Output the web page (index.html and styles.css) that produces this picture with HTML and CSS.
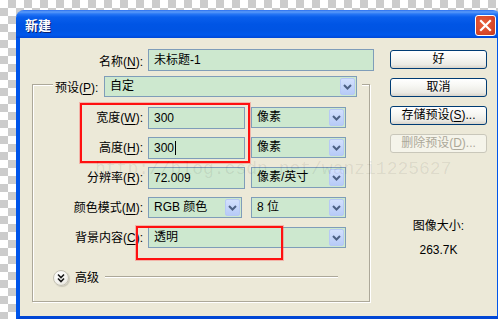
FILE: index.html
```html
<!DOCTYPE html>
<html>
<head>
<meta charset="utf-8">
<link rel="stylesheet" href="styles.css">
</head>
<body>
<div class="dialog">
  <div class="titlebar">
    <span class="title">新建</span>
    <span class="close"><svg width="13" height="13" viewBox="0 0 13 13"><path d="M2 2 L11 11 M11 2 L2 11" stroke="#fff" stroke-width="2.2" stroke-linecap="square"/></svg></span>
  </div>
  <div class="client">
    <div class="left">
      <div class="name-row">
        <span class="lbl">名称(<u>N</u>):</span>
        <div class="field w-name">未标题-1</div>
      </div>
      <div class="group">
        <div class="legend">
          <span class="lbl-legend">预设(<u>P</u>):</span>
          <div class="combo w-preset"><span class="val">自定</span><span class="drop"><svg width="9" height="6" viewBox="0 0 9 6"><path d="M1 1 L4.5 4.5 L8 1" fill="none" stroke="#4D6185" stroke-width="2"/></svg></span></div>
        </div>
        <div class="row first">
          <span class="lbl">宽度(<u>W</u>):</span>
          <div class="field w-num">300</div>
          <div class="combo w-unit"><span class="val">像素</span><span class="drop"><svg width="9" height="6" viewBox="0 0 9 6"><path d="M1 1 L4.5 4.5 L8 1" fill="none" stroke="#4D6185" stroke-width="2"/></svg></span></div>
        </div>
        <div class="row">
          <span class="lbl">高度(<u>H</u>):</span>
          <div class="field w-num">300<span class="caret"></span></div>
          <div class="combo w-unit"><span class="val">像素</span><span class="drop"><svg width="9" height="6" viewBox="0 0 9 6"><path d="M1 1 L4.5 4.5 L8 1" fill="none" stroke="#4D6185" stroke-width="2"/></svg></span></div>
        </div>
        <div class="row">
          <span class="lbl">分辨率(<u>R</u>):</span>
          <div class="field w-num">72.009</div>
          <div class="combo w-unit"><span class="val">像素/英寸</span><span class="drop"><svg width="9" height="6" viewBox="0 0 9 6"><path d="M1 1 L4.5 4.5 L8 1" fill="none" stroke="#4D6185" stroke-width="2"/></svg></span></div>
        </div>
        <div class="row">
          <span class="lbl">颜色模式(<u>M</u>):</span>
          <div class="combo w-mode"><span class="val">RGB 颜色</span><span class="drop"><svg width="9" height="6" viewBox="0 0 9 6"><path d="M1 1 L4.5 4.5 L8 1" fill="none" stroke="#4D6185" stroke-width="2"/></svg></span></div>
          <div class="combo w-unit"><span class="val">8 位</span><span class="drop"><svg width="9" height="6" viewBox="0 0 9 6"><path d="M1 1 L4.5 4.5 L8 1" fill="none" stroke="#4D6185" stroke-width="2"/></svg></span></div>
        </div>
        <div class="row">
          <span class="lbl">背景内容(<u>C</u>):</span>
          <div class="combo w-bg"><span class="val">透明</span><span class="drop"><svg width="9" height="6" viewBox="0 0 9 6"><path d="M1 1 L4.5 4.5 L8 1" fill="none" stroke="#4D6185" stroke-width="2"/></svg></span></div>
        </div>
        <div class="advanced">
          <span class="adv-icon"><svg width="16" height="16" viewBox="0 0 16 16"><path d="M5 4.5 L8 7.5 L11 4.5 M5 8.5 L8 11.5 L11 8.5" fill="none" stroke="#1a1a1a" stroke-width="1.6"/></svg></span>
          <span class="adv-text">高级</span>
          <span class="adv-line"></span>
        </div>
        <div class="redbox rb1"></div>
        <div class="redbox rb2"></div>
      </div>
    </div>
    <div class="right">
      <div class="btn">好</div>
      <div class="btn">取消</div>
      <div class="btn">存储预设(<u>S</u>)...</div>
      <div class="btn disabled">删除预设(<u>D</u>)...</div>
      <div class="size-label">图像大小:</div>
      <div class="size-val">263.7K</div>
    </div>
    <div class="watermark">http://blog.csdn.net/wanzi1225627</div>
  </div>
</div>
</body>
</html>
```

FILE: styles.css
```css
html, body {
  margin: 0;
  padding: 0;
}
body {
  width: 498px;
  height: 319px;
  overflow: hidden;
  background: repeating-conic-gradient(#cccccc 0 25%, #ffffff 0 50%) 0 0 / 16px 16px;
  font-family: "Liberation Sans", "Noto Sans CJK SC", sans-serif;
  font-size: 12px;
  color: #000;
}
.dialog {
  margin: 10px 0 0 16px;
  width: 485px;
}
.titlebar {
  height: 28px;
  box-sizing: border-box;
  border-radius: 8px 8px 0 0;
  background: linear-gradient(to bottom, #2a6ff0 0px, #5b9bf8 2px, #2877f5 4px, #0a5fec 7px, #0055e5 14px, #0054e3 20px, #0058ec 25px, #0047d6 28px);
  display: flex;
  align-items: flex-start;
  justify-content: space-between;
  padding: 5px 5px 0 9px;
}
.title {
  margin-top: 2px;
  line-height: 16px;
  font-family: "Noto Sans CJK SC", sans-serif;
  font-weight: bold;
  font-size: 13px;
  color: #fff;
  text-shadow: 1px 1px 0 #0a1e6e;
}
.close {
  width: 21px;
  height: 21px;
  box-sizing: border-box;
  border: 1px solid #fff;
  border-radius: 3px;
  background: radial-gradient(circle at 40% 40%, #e8603c 0%, #d9482a 60%, #c2391c 100%);
  display: flex;
  align-items: center;
  justify-content: center;
}
.client {
  position: relative;
  height: 282px;
  box-sizing: border-box;
  background: #ece9d8;
  border-left: 4px solid #0055ea;
  border-right: 4px solid #0055ea;
  border-bottom: 4px solid #0046d5;
  padding: 11px 0 0 12px;
  display: flex;
  align-items: flex-start;
}
.left {
  width: 342px;
}
.name-row {
  display: flex;
  align-items: center;
}
.lbl {
  width: 110px;
  margin-right: 5px;
  text-align: right;
  white-space: nowrap;
}
.name-row .lbl {
  width: 111px;
}
u {
  text-decoration: underline;
  text-underline-offset: 2px;
}
.field {
  height: 22px;
  box-sizing: border-box;
  border: 1px solid #7f9db9;
  background: #cde8cf;
  padding-left: 5px;
  line-height: 20px;
  white-space: nowrap;
  display: flex;
  align-items: center;
}
.caret {
  display: inline-block;
  width: 1px;
  height: 14px;
  background: #000;
  margin-left: 1px;
}
.w-name { width: 226px; }
.w-num { width: 97px; margin-right: 6px; }
.combo {
  height: 21px;
  box-sizing: border-box;
  border: 1px solid #7f9db9;
  background: #cde8cf;
  display: flex;
  align-items: stretch;
  white-space: nowrap;
}
.combo .val {
  flex: 1;
  padding-left: 5px;
  line-height: 19px;
}
.combo .drop {
  width: 15px;
  margin: 1px;
  box-sizing: border-box;
  border: 1px solid #b7c9f5;
  border-radius: 2px;
  background: linear-gradient(to bottom, #d3e0fd, #b7cbf7);
  display: flex;
  align-items: center;
  justify-content: center;
}
.w-preset { width: 253px; }
.w-unit { width: 95px; }
.w-mode { width: 94px; margin-right: 9px; }
.w-bg { width: 198px; }
.group {
  position: relative;
  margin-top: 13px;
  width: 338px;
  box-sizing: border-box;
  border: 1px solid #aca899;
  box-shadow: 1px 1px 0 #fff, inset 1px 1px 0 #fff;
  padding-bottom: 15px;
}
.legend {
  display: flex;
  align-items: center;
  width: fit-content;
  height: 21px;
  margin: -9px 0 0 20px;
  padding: 0 5px 0 2px;
  background: #ece9d8;
}
.lbl-legend {
  width: 44px;
  margin-right: 5px;
  white-space: nowrap;
}
.row {
  display: flex;
  align-items: flex-start;
  margin-top: 8px;
}
.row .lbl {
  line-height: 22px;
}
.row.first {
  margin-top: 10px;
}
.advanced {
  display: flex;
  align-items: center;
  margin: 21px 0 0 20px;
  height: 16px;
}
.adv-icon {
  width: 16px;
  height: 16px;
  box-sizing: border-box;
  border-radius: 50%;
  border: 1px solid #c4c1b4;
  background: radial-gradient(circle at 40% 35%, #ffffff 0%, #f4f3ee 55%, #d8d5ca 100%);
  box-shadow: 1px 1px 1px rgba(0,0,0,0.15);
  display: flex;
  align-items: center;
  justify-content: center;
}
.adv-icon svg {
  margin: -1px;
}
.adv-text {
  margin-left: 6px;
  line-height: 16px;
}
.adv-line {
  width: 233px;
  margin-left: 6px;
  margin-top: -2px;
  border-top: 1px solid #aca899;
  border-bottom: 1px solid #fff;
}
.redbox {
  position: absolute;
  box-sizing: border-box;
  border: 2px solid #ff1010;
  box-shadow: 0 0 0 1px rgba(255, 80, 80, 0.35);
}
.rb1 { left: 47px; top: 18px; width: 170px; height: 60px; }
.rb2 { left: 103px; top: 141px; width: 147px; height: 34px; }
.right {
  width: 97px;
  margin: 1px 0 0 16px;
  display: flex;
  flex-direction: column;
  gap: 9px;
}
.btn {
  height: 19px;
  box-sizing: border-box;
  border: 1px solid #003c74;
  border-radius: 3px;
  background: linear-gradient(to bottom, #ffffff 0%, #f7f7f3 40%, #ebeae4 80%, #d8d4ca 100%);
  text-align: center;
  line-height: 17px;
  white-space: nowrap;
}
.btn.disabled {
  border-color: #c9c7ba;
  background: #f5f4ea;
  color: #aca899;
}
.size-label {
  margin-top: 56px;
  text-align: center;
  line-height: 16px;
}
.size-val {
  margin-top: -1px;
  text-align: center;
  line-height: 16px;
}
.watermark {
  position: absolute;
  left: 75px;
  top: 121px;
  font-family: "Liberation Mono", monospace;
  font-size: 18px;
  line-height: 20px;
  color: rgba(0, 0, 0, 0.08);
  pointer-events: none;
  white-space: nowrap;
}
```
